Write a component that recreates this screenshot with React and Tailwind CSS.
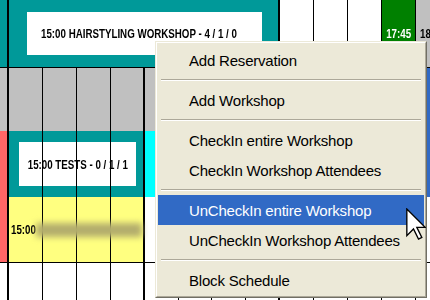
import React from "react";

const evText =
  "inline-block shrink-0 whitespace-nowrap text-[13px] font-bold leading-none text-black scale-x-[0.75]";

function Sep() {
  return (
    <div className="mx-[3px] my-[4px] h-[2px] border-t border-b border-t-[#ACA899] border-b-white" />
  );
}

function Item({ children, active }) {
  return (
    <div
      className={
        active
          ? "h-[30px] flex items-center pl-[31px] bg-[#316AC5] text-white"
          : "h-[30px] flex items-center pl-[31px] text-black"
      }
    >
      {children}
    </div>
  );
}

export default function App() {
  return (
    <div className="relative w-[430px] h-[300px] overflow-hidden bg-white font-['Liberation_Sans',Arial,sans-serif]">
      {/* Row A */}
      <div className="flex h-[67px]">
        <div className="w-[7px] shrink-0 bg-[#009999]" />
        <div className="w-[271px] shrink-0 border-l-2 border-black bg-[#009999] pl-[18px] pr-[16px] py-[12px] flex">
          <div className="flex-1 bg-white flex items-center pl-[14px] overflow-hidden">
            <span className={evText + " origin-left"}>
              15:00 HAIRSTYLING WORKSHOP - 4 / 1 / 0
            </span>
          </div>
        </div>
        <div className="w-[35px] shrink-0 border-l-2 border-black bg-white" />
        <div className="w-[34px] shrink-0 border-l border-black bg-white" />
        <div className="w-[34px] shrink-0 border-l border-black bg-white" />
        <div className="w-[34px] shrink-0 border-l border-black bg-[#008000] flex items-center justify-center overflow-hidden">
          <span className="inline-block shrink-0 whitespace-nowrap text-[13px] font-bold leading-none text-white scale-x-[0.75] origin-center">
            17:45
          </span>
        </div>
        <div className="w-[15px] shrink-0 border-l border-black bg-[#C0C0C0] flex items-center pl-[4px] overflow-hidden">
          <span className={evText + " origin-left"}>18</span>
        </div>
      </div>

      {/* Row B */}
      <div className="flex h-[64px] border-t border-black">
        <div className="w-[7px] shrink-0 bg-[#C0C0C0]" />
        <div className="w-[35px] shrink-0 border-l-2 border-black bg-[#C0C0C0]" />
        <div className="w-[34px] shrink-0 border-l border-black bg-[#C0C0C0]" />
        <div className="w-[34px] shrink-0 border-l border-black bg-[#C0C0C0]" />
        <div className="w-[33px] shrink-0 border-l border-black bg-[#C0C0C0]" />
        <div className="w-[35px] shrink-0 border-l-2 border-black bg-[#C0C0C0]" />
        <div className="w-[33px] shrink-0 border-l border-black bg-[#C0C0C0]" />
        <div className="w-[34px] shrink-0 border-l border-black bg-[#C0C0C0]" />
        <div className="w-[33px] shrink-0 border-l border-black bg-[#C0C0C0]" />
        <div className="w-[35px] shrink-0 border-l-2 border-black bg-white" />
        <div className="w-[34px] shrink-0 border-l border-black bg-white" />
        <div className="w-[34px] shrink-0 border-l border-black bg-white" />
        <div className="w-[34px] shrink-0 border-l border-black bg-white" />
        <div className="w-[15px] shrink-0 border-l border-black bg-[#316AC5]" />
      </div>

      {/* Row C */}
      <div className="flex h-[66px]">
        <div className="w-[7px] shrink-0 bg-[#FF6666]" />
        <div className="relative w-[136px] shrink-0 border-l-2 border-black bg-[#009999] pl-[10px] pr-[7px] py-[11px] flex">
          <div className="flex-1 bg-white flex items-center justify-center overflow-hidden">
            <span className={evText + " origin-center"}>15:00 TESTS - 0 / 1 / 1</span>
          </div>
          <div className="absolute left-[33px] top-0 bottom-0 w-px bg-black" />
          <div className="absolute left-[67px] top-0 bottom-0 w-px bg-black" />
          <div className="absolute left-[101px] top-0 bottom-0 w-px bg-black" />
        </div>
        <div className="w-[35px] shrink-0 border-l-2 border-black bg-[#00FFFF]" />
        <div className="w-[33px] shrink-0 border-l border-black bg-white" />
        <div className="w-[34px] shrink-0 border-l border-black bg-white" />
        <div className="w-[33px] shrink-0 border-l border-black bg-white" />
        <div className="w-[35px] shrink-0 border-l-2 border-black bg-white" />
        <div className="w-[34px] shrink-0 border-l border-black bg-white" />
        <div className="w-[34px] shrink-0 border-l border-black bg-white" />
        <div className="w-[34px] shrink-0 border-l border-black bg-white" />
        <div className="w-[15px] shrink-0 border-l border-black bg-[#316AC5]" />
      </div>

      {/* Row D */}
      <div className="flex h-[65px]">
        <div className="w-[7px] shrink-0 bg-[#FF6666]" />
        <div className="relative w-[136px] shrink-0 border-l-2 border-black bg-[#FFFF80] flex items-center pl-[2px]">
          <div className="absolute left-[33px] top-0 bottom-0 w-px bg-black" />
          <div className="absolute left-[67px] top-0 bottom-0 w-px bg-black" />
          <div className="absolute left-[101px] top-0 bottom-0 w-px bg-black" />
          <div className="relative z-10 w-[25px] shrink-0 flex items-center">
            <span className={evText + " origin-left"}>15:00</span>
          </div>
          <div className="relative z-10 h-[14px] w-[106px] shrink-0 bg-[#b3ad6c] blur-[3px]" />
        </div>
        <div className="w-[35px] shrink-0 border-l-2 border-black bg-white" />
        <div className="w-[33px] shrink-0 border-l border-black bg-white" />
        <div className="w-[34px] shrink-0 border-l border-black bg-white" />
        <div className="w-[33px] shrink-0 border-l border-black bg-white" />
        <div className="w-[35px] shrink-0 border-l-2 border-black bg-white" />
        <div className="w-[34px] shrink-0 border-l border-black bg-white" />
        <div className="w-[34px] shrink-0 border-l border-black bg-white" />
        <div className="w-[34px] shrink-0 border-l border-black bg-white" />
        <div className="w-[15px] shrink-0 border-l border-black bg-white" />
      </div>

      {/* Row E */}
      <div className="flex h-[38px] border-t border-black">
        <div className="w-[7px] shrink-0 bg-white" />
        <div className="w-[35px] shrink-0 border-l-2 border-black bg-white" />
        <div className="w-[34px] shrink-0 border-l border-black bg-white" />
        <div className="w-[34px] shrink-0 border-l border-black bg-white" />
        <div className="w-[33px] shrink-0 border-l border-black bg-white" />
        <div className="w-[35px] shrink-0 border-l-2 border-black bg-white" />
        <div className="w-[33px] shrink-0 border-l border-black bg-white" />
        <div className="w-[34px] shrink-0 border-l border-black bg-white" />
        <div className="w-[33px] shrink-0 border-l border-black bg-white" />
        <div className="w-[35px] shrink-0 border-l-2 border-black bg-white" />
        <div className="w-[34px] shrink-0 border-l border-black bg-white" />
        <div className="w-[34px] shrink-0 border-l border-black bg-white" />
        <div className="w-[34px] shrink-0 border-l border-black bg-white" />
        <div className="w-[15px] shrink-0 border-l border-black bg-white" />
      </div>

      {/* Context menu */}
      <div className="absolute left-[155px] top-[41px] w-[272px] h-[257px] border border-t-[#ECE9D8] border-l-[#ECE9D8] border-r-[#716F64] border-b-[#716F64]">
        <div className="h-full border border-t-white border-l-white border-r-[#ACA899] border-b-[#ACA899] bg-[#ECE9D8] px-px pt-[2px] pb-px text-[15px] tracking-[-0.2px] leading-none">
          <Item>Add Reservation</Item>
          <Sep />
          <Item>Add Workshop</Item>
          <Sep />
          <Item>CheckIn entire Workshop</Item>
          <Item>CheckIn Workshop Attendees</Item>
          <Sep />
          <Item active>UnCheckIn entire Workshop</Item>
          <Item>UnCheckIn Workshop Attendees</Item>
          <Sep />
          <Item>Block Schedule</Item>
        </div>
      </div>

      {/* Mouse cursor */}
      <svg
        className="absolute left-[406px] top-[208px]"
        width="20"
        height="32"
        viewBox="0 0 12 19"
      >
        <path
          d="M0.5 0.5 L0.5 16.5 L4.5 12.5 L7.5 18.5 L9.5 17.5 L6.5 11.5 L11.5 11.5 Z"
          fill="#fff"
          stroke="#000"
          strokeWidth="0.8"
          strokeLinejoin="miter"
        />
      </svg>
    </div>
  );
}
